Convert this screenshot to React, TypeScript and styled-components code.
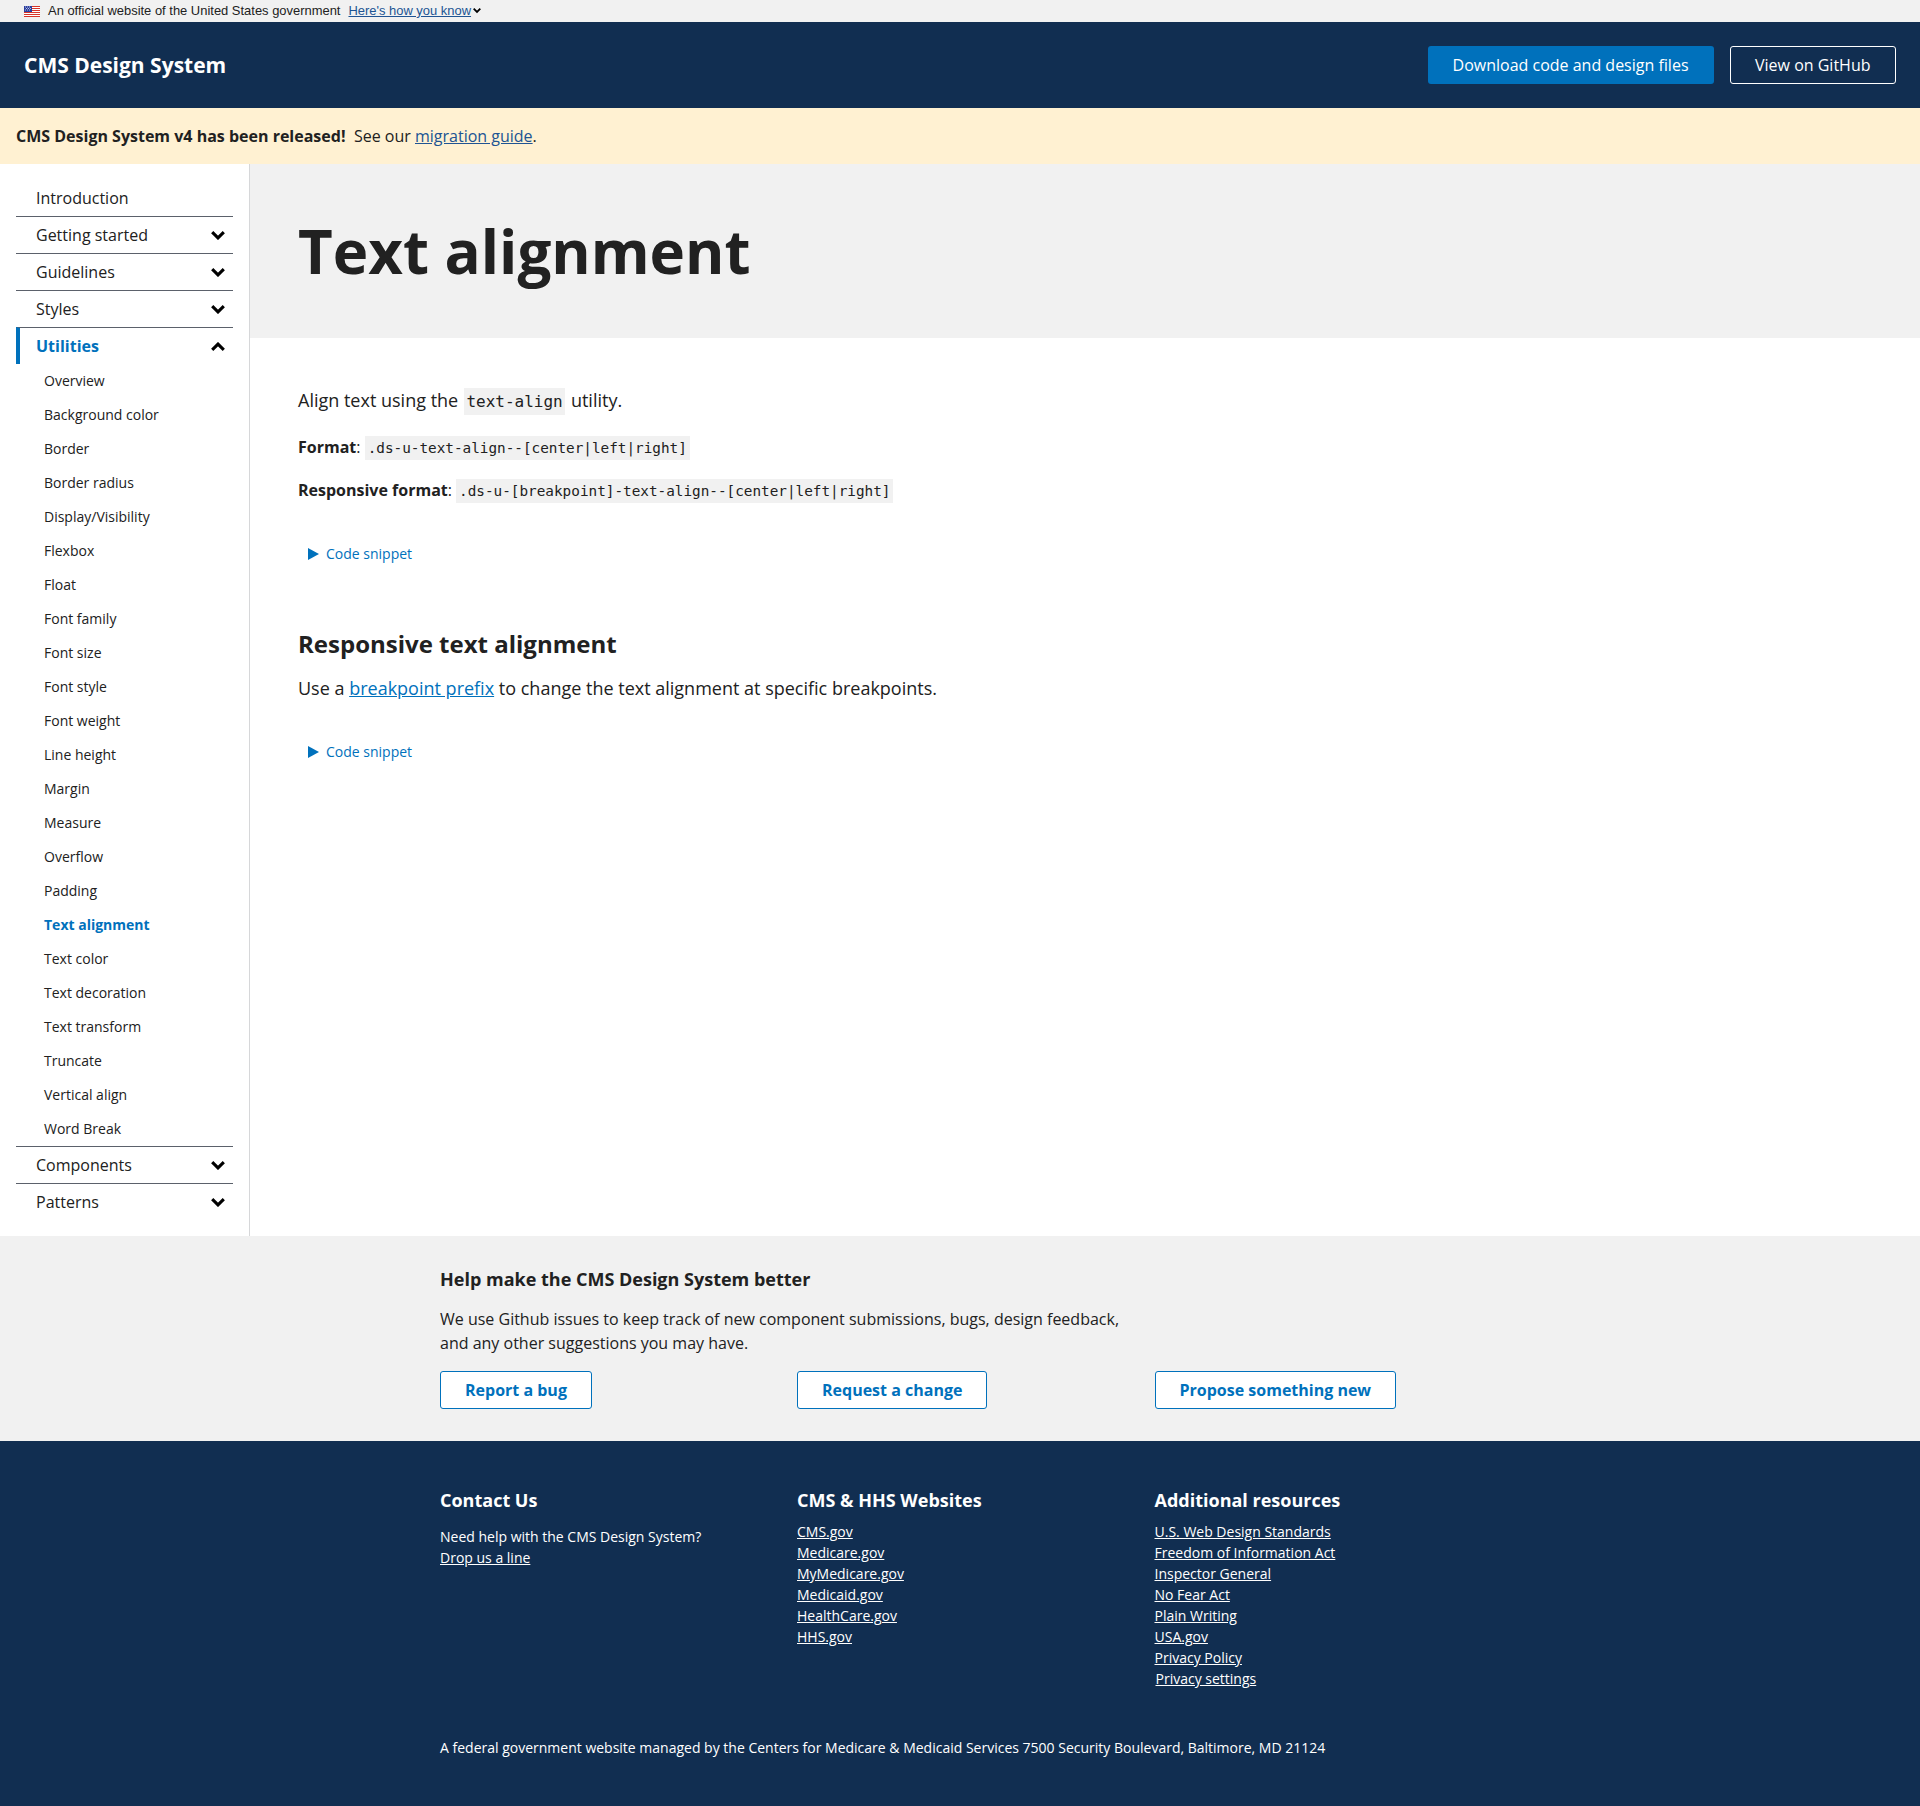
import React from "react";
import styled, { createGlobalStyle } from "styled-components";

const GlobalStyle = createGlobalStyle`
  body {
    margin: 0;
    background: #fff;
    color: #212121;
    font-family: "Open Sans", "Noto Sans", sans-serif;
    font-size: 16px;
    line-height: 24px;
  }
`;

const subItems = [
  "Overview",
  "Background color",
  "Border",
  "Border radius",
  "Display/Visibility",
  "Flexbox",
  "Float",
  "Font family",
  "Font size",
  "Font style",
  "Font weight",
  "Line height",
  "Margin",
  "Measure",
  "Overflow",
  "Padding",
  "Text alignment",
  "Text color",
  "Text decoration",
  "Text transform",
  "Truncate",
  "Vertical align",
  "Word Break",
];

const websites = ["CMS.gov", "Medicare.gov", "MyMedicare.gov", "Medicaid.gov", "HealthCare.gov", "HHS.gov"];

const resources = [
  "U.S. Web Design Standards",
  "Freedom of Information Act",
  "Inspector General",
  "No Fear Act",
  "Plain Writing",
  "USA.gov",
  "Privacy Policy",
];

const Chevron = ({ up, size = 14 }: { up?: boolean; size?: number }) => (
  <svg width={size} height={(size * 9) / 14} viewBox="0 0 14 9" aria-hidden="true">
    <path
      d={up ? "M1.2 7.9 L7 2.1 L12.8 7.9" : "M1.2 1.1 L7 6.9 L12.8 1.1"}
      fill="none"
      stroke="currentColor"
      strokeWidth="3.1"
    />
  </svg>
);

const Flag = () => (
  <svg width="16" height="11" viewBox="0 0 16 11" aria-hidden="true">
    <rect width="16" height="11" fill="#fff" />
    <rect width="16" height="1" y="0" fill="#d8352a" />
    <rect width="16" height="1" y="2" fill="#d8352a" />
    <rect width="16" height="1" y="4" fill="#d8352a" />
    <rect width="16" height="1" y="6" fill="#d8352a" />
    <rect width="16" height="1" y="8" fill="#d8352a" />
    <rect width="16" height="1" y="10" fill="#d8352a" />
    <rect width="8" height="6" fill="#2b3f9e" />
    <path d="M1 1h1M3 1h1M5 1h1M2 2.5h1M4 2.5h1M6 2.5h1M1 4h1M3 4h1M5 4h1" stroke="#dfe3f5" strokeWidth="0.8" />
  </svg>
);

const Triangle = () => (
  <svg width="11" height="12" viewBox="0 0 11 12" aria-hidden="true">
    <path d="M0 0 L11 6 L0 12 Z" fill="currentColor" />
  </svg>
);

const Snippet = ({ top }: { top: number }) => (
  <SnippetToggle $top={top}>
    <Triangle />
    Code snippet
  </SnippetToggle>
);

const App = () => {
  return (
    <Page>
      <GlobalStyle />
      <GovBanner>
        <Flag />
        <GovText>An official website of the United States government</GovText>
        <GovLink>Here's how you know</GovLink>
        <GovChevron>
          <Chevron size={8} />
        </GovChevron>
      </GovBanner>
      <Header>
        <Brand>CMS Design System</Brand>
        <HeaderActions>
          <PrimaryButton>Download code and design files</PrimaryButton>
          <GhostButton>View on GitHub</GhostButton>
        </HeaderActions>
      </Header>
      <Alert>
        <strong>CMS Design System v4 has been released!</strong>
        <AlertRest>
          See our <AlertLink>migration guide</AlertLink>.
        </AlertRest>
      </Alert>
      <Main>
        <Sidebar>
          <NavItem $first>Introduction</NavItem>
          <NavItem>
            Getting started
            <Chevron />
          </NavItem>
          <NavItem>
            Guidelines
            <Chevron />
          </NavItem>
          <NavItem>
            Styles
            <Chevron />
          </NavItem>
          <NavItem $active>
            Utilities
            <Chevron up />
          </NavItem>
          <SubList>
            {subItems.map((item) => (
              <SubItem key={item} $active={item === "Text alignment"}>
                {item}
              </SubItem>
            ))}
          </SubList>
          <NavItem>
            Components
            <Chevron />
          </NavItem>
          <NavItem>
            Patterns
            <Chevron />
          </NavItem>
        </Sidebar>
        <Content>
          <Hero>
            <Title>Text alignment</Title>
          </Hero>
          <Body>
            <Lead>
              Align text using the <LeadCode>text-align</LeadCode> utility.
            </Lead>
            <FormatLine $top={15}>
              <strong>Format</strong>: <Code>.ds-u-text-align--[center|left|right]</Code>
            </FormatLine>
            <FormatLine $top={14}>
              <strong>Responsive format</strong>: <Code>.ds-u-[breakpoint]-text-align--[center|left|right]</Code>
            </FormatLine>
            <Snippet top={37} />
            <SectionTitle>Responsive text alignment</SectionTitle>
            <Lead>
              Use a <BodyLink>breakpoint prefix</BodyLink> to change the text alignment at specific breakpoints.
            </Lead>
            <Snippet top={36} />
          </Body>
        </Content>
      </Main>
      <Feedback>
        <FooterGrid>
          <FeedbackTitle>Help make the CMS Design System better</FeedbackTitle>
          <FeedbackText>
            We use Github issues to keep track of new component submissions, bugs, design feedback, and any other
            suggestions you may have.
          </FeedbackText>
          <div>
            <OutlineButton>Report a bug</OutlineButton>
          </div>
          <div>
            <OutlineButton>Request a change</OutlineButton>
          </div>
          <div>
            <OutlineButton>Propose something new</OutlineButton>
          </div>
        </FooterGrid>
      </Feedback>
      <Footer>
        <FooterGrid>
          <div>
            <FooterTitle>Contact Us</FooterTitle>
            <ContactText>Need help with the CMS Design System?</ContactText>
            <FooterLink>Drop us a line</FooterLink>
          </div>
          <div>
            <FooterTitle>CMS &amp; HHS Websites</FooterTitle>
            <LinkList>
              {websites.map((site) => (
                <FooterLink key={site}>{site}</FooterLink>
              ))}
            </LinkList>
          </div>
          <div>
            <FooterTitle>Additional resources</FooterTitle>
            <LinkList>
              {resources.map((item) => (
                <FooterLink key={item}>{item}</FooterLink>
              ))}
              <SettingsLink>Privacy settings</SettingsLink>
            </LinkList>
          </div>
        </FooterGrid>
        <FooterNote>
          A federal government website managed by the Centers for Medicare &amp; Medicaid Services 7500 Security
          Boulevard, Baltimore, MD 21124
        </FooterNote>
      </Footer>
    </Page>
  );
};

const Page = styled.div`
  width: 1920px;
  min-height: 1806px;
  display: flex;
  flex-direction: column;
`;

const GovBanner = styled.div`
  height: 22px;
  padding-left: 24px;
  display: flex;
  align-items: center;
  background: #f1f1f1;
  font-family: "Liberation Sans", Arial, sans-serif;
  font-size: 12.95px;
  line-height: 22px;
  box-sizing: border-box;
`;

const GovText = styled.span`
  margin-left: 8px;
`;

const GovLink = styled.a`
  margin-left: 8px;
  color: #205493;
  text-decoration: underline;
`;

const GovChevron = styled.span`
  margin-left: 2px;
  display: flex;
  color: #000;
`;

const Header = styled.header`
  height: 86px;
  padding: 0 24px;
  display: flex;
  align-items: center;
  justify-content: space-between;
  background: #112e51;
  box-sizing: border-box;
`;

const Brand = styled.div`
  color: #fff;
  font-size: 21px;
  font-weight: 700;
`;

const HeaderActions = styled.div`
  display: flex;
  gap: 16px;
`;

const PrimaryButton = styled.a`
  height: 38px;
  padding: 0 25px;
  display: flex;
  align-items: center;
  background: #0071bc;
  border-radius: 3px;
  color: #fff;
  font-size: 16px;
  box-sizing: border-box;
`;

const GhostButton = styled(PrimaryButton)`
  padding: 0 24.5px;
  background: transparent;
  border: 1px solid #fff;
`;

const Alert = styled.div`
  height: 56px;
  padding: 0 16px;
  display: flex;
  align-items: center;
  background: #fff1d2;
  box-sizing: border-box;
`;

const AlertRest = styled.span`
  margin-left: 8.5px;
`;

const AlertLink = styled.a`
  color: #205493;
  text-decoration: underline;
`;

const Main = styled.div`
  display: flex;
  height: 1072px;
`;

const Sidebar = styled.nav`
  width: 250px;
  padding: 16px 16px 0;
  border-right: 1px solid #d6d7d9;
  box-sizing: border-box;
  flex: none;
`;

const NavItem = styled.div<{ $first?: boolean; $active?: boolean }>`
  height: ${(p) => (p.$first ? "36px" : "37px")};
  padding: 0 8px 0 ${(p) => (p.$active ? "16px" : "20px")};
  display: flex;
  align-items: center;
  justify-content: space-between;
  border-top: ${(p) => (p.$first ? "0" : "1px solid #5b616b")};
  border-left: ${(p) => (p.$active ? "4px solid #0071bc" : "0")};
  color: ${(p) => (p.$active ? "#0071bc" : "#212121")};
  font-weight: ${(p) => (p.$active ? 700 : 400)};
  box-sizing: border-box;

  svg {
    color: #000;
    flex: none;
  }
`;

const SubList = styled.div`
  display: flex;
  flex-direction: column;
`;

const SubItem = styled.div<{ $active?: boolean }>`
  height: 34px;
  padding-left: 28px;
  display: flex;
  align-items: center;
  color: ${(p) => (p.$active ? "#0071bc" : "#212121")};
  font-size: 14px;
  font-weight: ${(p) => (p.$active ? 700 : 400)};
`;

const Content = styled.main`
  flex: 1;
  min-width: 0;
`;

const Hero = styled.div`
  height: 174px;
  padding-left: 48px;
  display: flex;
  align-items: center;
  background: #f1f1f1;
`;

const Title = styled.h1`
  margin: 0;
  font-size: 60px;
  line-height: 1.3;
  font-weight: 700;
`;

const Body = styled.div`
  padding: 46px 48px 0;
`;

const Lead = styled.p`
  margin: 0;
  font-size: 18px;
  line-height: 32px;
`;

const LeadCode = styled.code`
  padding: 4px 2.5px;
  margin: 0 1px;
  background: #f1f1f1;
  font-family: "DejaVu Sans Mono", "Liberation Mono", monospace;
  font-size: 16px;
`;

const FormatLine = styled.p<{ $top: number }>`
  margin: ${(p) => p.$top}px 0 0;
  line-height: 28px;
  font-size: 16px;
`;

const Code = styled.code`
  padding: 4px 3px;
  background: #f1f1f1;
  font-family: "DejaVu Sans Mono", "Liberation Mono", monospace;
  font-size: 14.33px;
`;

const SnippetToggle = styled.div<{ $top: number }>`
  margin-top: ${(p) => p.$top}px;
  padding-left: 10px;
  display: flex;
  align-items: center;
  gap: 7px;
  color: #0071bc;
  font-size: 14px;
  line-height: 24px;
`;

const SectionTitle = styled.h2`
  margin: 62px 0 12px;
  font-size: 24px;
  line-height: 32px;
  font-weight: 700;
`;

const BodyLink = styled.a`
  color: #0071bc;
  text-decoration: underline;
`;

const Feedback = styled.section`
  height: 205px;
  padding-top: 31px;
  background: #f1f1f1;
  box-sizing: border-box;
`;

const FooterGrid = styled.div`
  width: 1072px;
  margin-left: 440px;
  display: grid;
  grid-template-columns: 357px 357.5px 357.5px;
`;

const FeedbackTitle = styled.h3`
  grid-column: 1 / -1;
  margin: 0;
  font-size: 18px;
  line-height: 24px;
  font-weight: 700;
`;

const FeedbackText = styled.p`
  grid-column: 1 / -1;
  max-width: 690px;
  margin: 16px 0 16px;
  font-size: 16px;
  line-height: 24px;
`;

const OutlineButton = styled.a`
  height: 38px;
  padding: 0 24px;
  display: inline-flex;
  align-items: center;
  background: #fff;
  border: 1px solid #0071bc;
  border-radius: 3px;
  color: #0071bc;
  font-size: 16px;
  font-weight: 700;
  box-sizing: border-box;
`;

const Footer = styled.footer`
  height: 365px;
  padding-top: 46px;
  background: #112e51;
  color: #fff;
  box-sizing: border-box;
`;

const FooterTitle = styled.h4`
  margin: 0 0 8px;
  font-size: 18px;
  line-height: 26px;
  font-weight: 700;
`;

const ContactText = styled.div`
  margin-top: 13px;
  font-size: 14px;
  line-height: 21px;
`;

const FooterLink = styled.a`
  display: block;
  width: fit-content;
  color: #fff;
  font-size: 14px;
  line-height: 21px;
  text-decoration: underline;
`;

const SettingsLink = styled(FooterLink)`
  margin-left: 1px;
`;

const LinkList = styled.div`
  display: flex;
  flex-direction: column;
`;

const FooterNote = styled.p`
  margin: 48px 0 0 440px;
  font-size: 14px;
  line-height: 21px;
`;

export default App;
